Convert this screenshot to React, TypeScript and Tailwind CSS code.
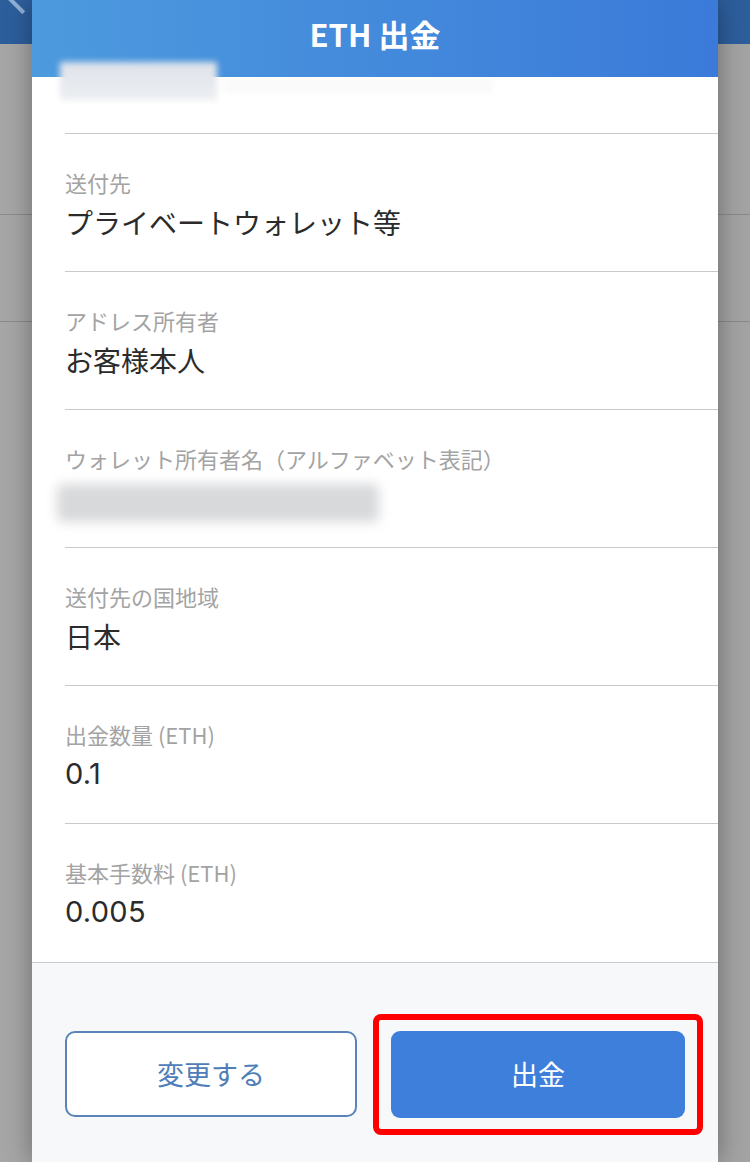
const font = "font-['Noto_Sans_CJK_JP','Noto_Sans',sans-serif]";

type Row = { label: string; value?: string; blurred?: boolean; latin?: boolean };

const rows: Row[] = [
  { label: "送付先", value: "プライベートウォレット等" },
  { label: "アドレス所有者", value: "お客様本人" },
  { label: "ウォレット所有者名（アルファベット表記）", blurred: true },
  { label: "送付先の国地域", value: "日本" },
  { label: "出金数量 (ETH)", value: "0.1", latin: true },
  { label: "基本手数料 (ETH)", value: "0.005", latin: true },
];

function DetailRow({ row, last }: { row: Row; last: boolean }) {
  return (
    <div className={"h-[138px] pt-[34px] " + (last ? "" : "border-b border-[#c9c9c9]")}>
      <div className="text-[22px] leading-[28px] text-[#a3a3a3]">{row.label}</div>
      {row.blurred ? (
        <div className="mt-[12px] -ml-[8px] h-[38px] w-[322px] rounded-md bg-[#d8d9db] blur-[6px]" />
      ) : (
        <div
          className={
            "mt-[6px] leading-[40px] text-[#2b2b2b] " +
            (row.latin ? "text-[29px] font-['Inter',sans-serif] tracking-[0.3px]" : "text-[28px]")
          }
        >
          {row.value}
        </div>
      )}
    </div>
  );
}

export default function App() {
  return (
    <div className={`relative h-[1162px] w-[750px] overflow-hidden bg-[#9c9c9c] ${font}`}>
      {/* page behind the overlay */}
      <div className="flex h-full flex-col bg-gradient-to-r from-[#a6a6a6] via-[#9a9a9a] to-[#a3a3a3]">
        <div className="h-[44px] bg-[#2d5e9c]" />
        <div className="h-[171px] border-b border-[#8a8a8a]" />
        <div className="h-[107px] border-b border-[#8a8a8a]" />
      </div>
      <div className="absolute left-[14px] top-[-6px] h-[22px] w-[4px] rotate-[-45deg] bg-[#8fb0d6]" />

      {/* modal */}
      <div className="absolute left-[32px] top-0 bottom-0 flex w-[686px] flex-col bg-white shadow-[0_0_24px_rgba(0,0,0,0.35)]">
        <div className="relative z-10 flex h-[77px] items-center justify-center bg-gradient-to-r from-[#4d9ade] to-[#3b7ad9] pb-[8px]">
          <h1 className="text-[31px] font-semibold text-white">ETH 出金</h1>
        </div>

        <div className="pl-[33px]">
          <div className="relative h-[57px] border-b border-[#c9c9c9]">
            <div className="absolute left-[-5px] top-[-15px] z-20 h-[38px] w-[157px] bg-gradient-to-b from-[#dfe3ea] to-[#eceef1] blur-[3px]" />
            <div className="absolute left-[158px] top-[2px] h-[14px] w-[270px] rounded bg-[#fafafa] blur-[2px]" />
          </div>
          {rows.map((r, i) => (
            <DetailRow key={r.label} row={r} last={i === rows.length - 1} />
          ))}
        </div>

        <div className="flex flex-1 items-start gap-[34px] border-t border-[#c9c9c9] bg-[#f7f8f9] px-[33px] pt-[68px]">
          <button className="flex h-[86px] w-[292px] items-center justify-center rounded-[10px] border-2 border-[#5a84b8] bg-white text-[27px] text-[#4e7db8]">
            変更する
          </button>
          <div className="relative">
            <div className="absolute -inset-x-[18px] -inset-y-[17px] rounded-[8px] border-[6px] border-[#ff0000]" />
            <button className="relative flex h-[87px] w-[294px] items-center justify-center rounded-[9px] bg-[#3f7fdc] text-[27px] text-white">
              出金
            </button>
          </div>
        </div>
      </div>
    </div>
  );
}
